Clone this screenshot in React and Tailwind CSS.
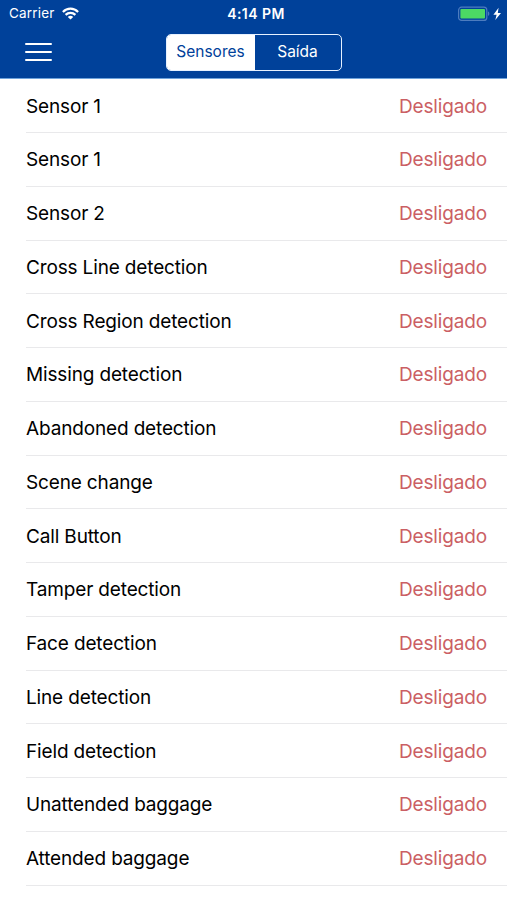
import React from "react";

const sensors = [
  "Sensor 1",
  "Sensor 1",
  "Sensor 2",
  "Cross Line detection",
  "Cross Region detection",
  "Missing detection",
  "Abandoned detection",
  "Scene change",
  "Call Button",
  "Tamper detection",
  "Face detection",
  "Line detection",
  "Field detection",
  "Unattended baggage",
  "Attended baggage",
];

function WifiIcon() {
  return (
    <svg
      className="ml-[7px] h-[13px] w-[17px]"
      viewBox="0 0 17 13"
      fill="none"
      stroke="white"
      strokeWidth="2.2"
    >
      <path d="M0.9 4.9C5.2 0.5 11.8 0.5 16.1 4.9" />
      <path d="M3.6 7.9C6.4 5.1 10.6 5.1 13.4 7.9" />
      <path d="M8.5 12.6L5.8 9.9C7.3 8.5 9.7 8.5 11.2 9.9Z" fill="white" stroke="none" />
    </svg>
  );
}

function BatteryIcon() {
  return (
    <svg className="h-[16px] w-[46px]" viewBox="0 0 46 16">
      <rect x="0.6" y="1.2" width="28.2" height="13.2" rx="3" fill="none" stroke="#4d7cbf" strokeWidth="1.2" />
      <rect x="2.4" y="3" width="24.6" height="9.6" rx="1" fill="#4cd964" />
      <path d="M30 5.6C31.8 6.2 31.8 9.4 30 10Z" fill="#4d7cbf" />
      <path d="M40.6 1.8L35.4 8.8H38.6L37.3 14L43 6.9H39.8Z" fill="white" />
    </svg>
  );
}

function StatusBar() {
  return (
    <div className="grid h-[27px] grid-cols-3 items-center pl-[9px] pr-[3px] text-[13.5px] text-white">
      <div className="flex items-center">
        <span className="tracking-[0.2px]">Carrier</span>
        <WifiIcon />
      </div>
      <span className="-mt-px -ml-px text-center text-[14px] font-semibold tracking-[0.45px]">4:14 PM</span>
      <div className="flex justify-end">
        <BatteryIcon />
      </div>
    </div>
  );
}

function NavBar() {
  return (
    <div className="grid h-[50px] grid-cols-[1fr_176px_1fr] items-center">
      <button className="ml-[25px] flex w-[27px] flex-col gap-[6px]">
        <span className="h-[2px] w-full rounded-full bg-white" />
        <span className="h-[2px] w-full rounded-full bg-white" />
        <span className="h-[2px] w-full rounded-full bg-white" />
      </button>
      <div className="grid h-[37px] grid-cols-[88px_1fr] overflow-hidden rounded-[5px] border-[1.5px] border-[#e6f1ff] text-[15.5px]">
        <button className="bg-white text-[#00419a]">Sensores</button>
        <button className="text-white">Saída</button>
      </div>
    </div>
  );
}

function SensorRow({ name }) {
  return (
    <li className="ml-[26px] flex h-[53.75px] items-center justify-between border-b border-[#e9e9eb] pr-[20px] pt-[2.4px]">
      <span className="text-black">{name}</span>
      <span className="text-[#cb5f64]">Desligado</span>
    </li>
  );
}

export default function App() {
  return (
    <div className="h-[900px] w-[507px] overflow-hidden bg-white font-['Inter','Liberation_Sans',sans-serif]">
      <header className="h-[79px] border-b border-[#6fa3dc] bg-[#00419a]">
        <StatusBar />
        <NavBar />
      </header>
      <ul className="pt-[0.4px] text-[19px] tracking-[-0.15px]">
        {sensors.map((name, i) => (
          <SensorRow key={i} name={name} />
        ))}
      </ul>
    </div>
  );
}
